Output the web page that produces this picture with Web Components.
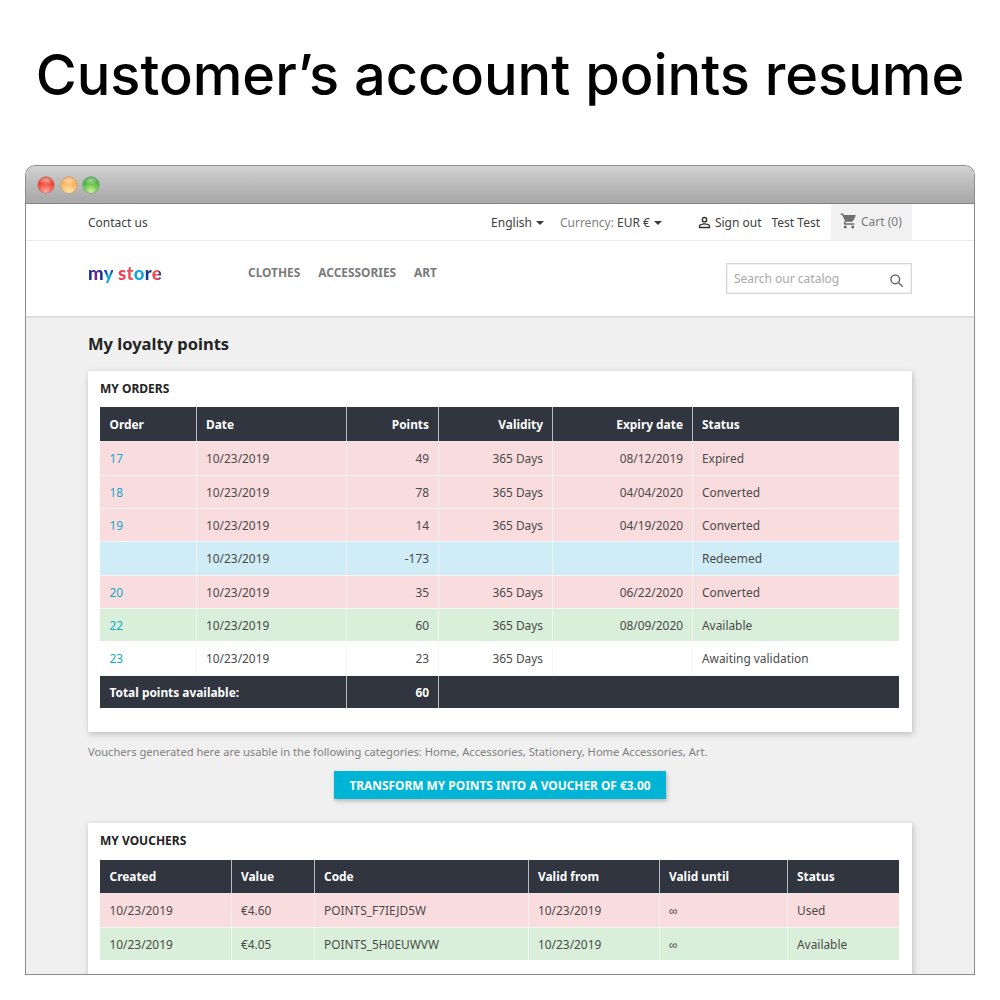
<!DOCTYPE html>
<html lang="en"><head><meta charset="utf-8"><title>Customer's account points resume</title>
<style>
html,body{margin:0;padding:0;background:#fff}
body{font-family:"Noto Sans",sans-serif;width:1000px;height:1000px;overflow:hidden}
</style></head><body>
<promo-page>
<h-title slot="title">Customer’s account points resume</h-title>
<app-window>
  <store-topbar></store-topbar>
  <store-header></store-header>
  <main-area>
    <page-heading>My loyalty points</page-heading>
    <points-card heading="My orders">
      <data-table id="orders"></data-table>
    </points-card>
    <note-text>Vouchers generated here are usable in the following categories: Home, Accessories, Stationery, Home Accessories, Art.</note-text>
    <action-button>Transform my points into a voucher of €3.00</action-button>
    <points-card heading="My vouchers">
      <data-table id="vouchers" style="margin-top:11px"></data-table>
    </points-card>
  </main-area>
</app-window>
</promo-page>
<script>
const def=(name,html,extra)=>{customElements.define(name,class extends HTMLElement{
  constructor(){super();this.attachShadow({mode:'open'}).innerHTML=html;}
  connectedCallback(){extra&&extra.call(this)}
})};
def('promo-page',`<style>:host{display:block}</style><slot name="title"></slot><slot></slot>`);
def('h-title',`<style>:host{display:block;height:165px;box-sizing:border-box;padding-top:39px;text-align:center;
font:540 55.9px/72px Inter,sans-serif;color:#000;white-space:nowrap}</style><slot></slot>`);
def('app-window',`<style>:host{display:block;width:950px;height:810px;margin-left:25px;box-sizing:border-box;border:1px solid #8b8b8b;border-top-color:#8f8f8f;border-radius:10px 10px 0 0;overflow:hidden;background:#f0f0f0}
.bar{height:37px;background:linear-gradient(#d2d2d2,#c6c6c6 25%,#acacac 85%,#a9a9a9);border-bottom:1px solid #828282;display:flex;align-items:center;gap:6.5px;padding-left:12px}
.d{width:16px;height:16px;border-radius:50%;box-sizing:border-box}
.r{background:radial-gradient(ellipse 60% 30% at 50% 18%,rgba(255,255,255,.55),transparent),radial-gradient(circle at 50% 90%,#ffa898,#f04838 55%,#d82818 85%);box-shadow:0 0 0 .5px #b85040}
.o{background:radial-gradient(ellipse 60% 30% at 50% 18%,rgba(255,255,255,.5),transparent),radial-gradient(circle at 50% 90%,#ffe4a8,#fcb560 55%,#e89038 90%);box-shadow:0 0 0 .5px #c89050}
.g{background:radial-gradient(ellipse 60% 30% at 50% 18%,rgba(255,255,255,.5),transparent),radial-gradient(circle at 50% 90%,#d0f098,#58bc44 55%,#1c8a20 90%);box-shadow:0 0 0 .5px #50904c}
</style><div class="bar"><span class="d r"></span><span class="d o"></span><span class="d g"></span></div><slot></slot>`);
def('store-topbar',`<style>:host{display:flex;align-items:center;height:36px;background:#fff;border-bottom:1px solid #eee;padding-left:62px;padding-right:62px;font-size:12px;color:#404040;line-height:36px;white-space:nowrap}
.sp{flex:1}.caret{display:inline-block;border:4px solid transparent;border-top-color:#3a3a3a;border-bottom:0;margin-left:4px;vertical-align:2px}
.tx{padding-top:2px}
.cur{margin-left:16px}.muted{color:#7f7f7f}
.u{margin-left:34px;display:flex;align-items:center;gap:2px}
.t{margin-left:10px;margin-right:11px}
.cart{width:81px;height:36px;background:#f1f1f1;display:flex;align-items:center;color:#7a7a7a;box-sizing:border-box;padding-left:9px;gap:3px;line-height:36px}
svg{display:block}
</style><span class="tx">Contact us</span><span class="sp"></span>
<span class="tx">English<i class="caret"></i></span>
<span class="cur tx"><span class="muted">Currency:</span> EUR €<i class="caret"></i></span>
<span class="u tx"><svg width="17" height="17" viewBox="0 0 24 24" fill="#2f2f2f" style="margin-top:-1px"><path d="M12 5.9a2.1 2.1 0 1 1 0 4.2 2.1 2.1 0 0 1 0-4.2m0 9c2.97 0 6.1 1.46 6.1 2.1v1.1H5.9V17c0-.64 3.13-2.1 6.1-2.1M12 4a4 4 0 1 0 0 8 4 4 0 0 0 0-8zm0 9c-2.67 0-8 1.34-8 4v3h16v-3c0-2.66-5.33-4-8-4z"/></svg>Sign out</span>
<span class="t tx">Test Test</span>
<span class="cart"><svg width="18" height="18" viewBox="0 0 24 24" fill="#6f6f6f" style="margin-top:-2px"><path d="M7 18c-1.1 0-1.99.9-1.99 2S5.9 22 7 22s2-.9 2-2-.9-2-2-2zM1 2v2h2l3.6 7.59-1.35 2.45c-.16.28-.25.61-.25.96 0 1.1.9 2 2 2h12v-2H7.42c-.14 0-.25-.11-.25-.25l.03-.12.9-1.63h7.45c.75 0 1.41-.41 1.75-1.03l3.58-6.49A1 1 0 0 0 20.01 4H5.21l-.94-2H1zm16 16c-1.1 0-1.99.9-1.99 2s.89 2 1.99 2 2-.9 2-2-.9-2-2-2z"/></svg><span>Cart (0)</span></span>`);
def('store-header',`<style>:host{display:flex;height:75px;background:#fff;box-shadow:0 1px 2px rgba(0,0,0,.14);padding:0 62px;position:relative}
.logo{width:160px;padding-top:18px;font:900 18.5px/28px Lato,sans-serif;letter-spacing:.3px;white-space:nowrap}
.logo b{font-weight:900;-webkit-background-clip:text;background-clip:text;color:transparent}
nav{display:flex;gap:18px;font-size:11.9px;font-weight:700;color:#7a7a7a;padding-top:23px;line-height:17px;flex:1}
.s{width:186px;height:31px;margin-top:22px;box-sizing:border-box;border:1px solid #d6d6d6;box-shadow:inset 0 0 0 .5px #e4e4e4;display:flex;align-items:center;justify-content:space-between;padding:0 7px 0 7px;font-size:12px;color:#a9a9a9}
.s span{margin-top:-1px}
svg{display:block;margin-top:3px}
</style><div class="logo"><b style="background-image:linear-gradient(90deg,#1c2f9c 30%,#8a1f8c 50%,#1c2f9c 70%)">m</b><b style="background-image:linear-gradient(#1f3fa8 40%,#12a9dc 65%)">y</b> <b style="background-image:linear-gradient(#ef4050,#ef4050)">s</b><b style="background-image:linear-gradient(#ef4b55,#ef4b55)">t</b><b style="background-image:linear-gradient(#12a4dc,#12a4dc)">o</b><b style="background-image:linear-gradient(#1a3a90,#1a3a90)">r</b><b style="background-image:linear-gradient(90deg,#ef4a50 60%,#1a3a90 80%)">e</b></div>
<nav><span>CLOTHES</span><span>ACCESSORIES</span><span>ART</span></nav>
<div class="s"><span>Search our catalog</span><svg width="15" height="15" viewBox="0 0 24 24" fill="none" stroke="#6a6a6a" stroke-width="2.4"><circle cx="10" cy="10" r="7"/><path d="M15.5 15.5 22 22"/></svg></div>`);
def('main-area',`<style>:host{display:block;padding:0 62px}</style><slot></slot>`);
def('page-heading',`<style>:host{display:block;font-size:16.5px;font-weight:700;color:#232323;line-height:24px;padding-top:16px;margin-bottom:15px}</style><slot></slot>`);
customElements.define('points-card',class extends HTMLElement{
  constructor(){super();this.attachShadow({mode:'open'}).innerHTML=`<style>:host{display:block;background:#fff;box-shadow:1px 2px 6px rgba(0,0,0,.22);padding:9px 13px 24px 12px}
  h2{margin:0 0 10px;font-size:12px;line-height:17px;font-weight:700;text-transform:uppercase;color:#232323}</style><h2></h2><slot></slot>`;}
  connectedCallback(){this.shadowRoot.querySelector('h2').textContent=this.getAttribute('heading')}
});
def('note-text',`<style>:host{display:block;font-size:11.15px;color:#7f7f7f;line-height:16px;margin-top:12px}</style><slot></slot>`);
def('action-button',`<style>:host{display:block;width:332px;height:28px;margin:11px auto 24px;background:#00b4d6;color:#fff;font-size:11.9px;font-weight:700;text-transform:uppercase;text-align:center;line-height:28px;box-shadow:1px 2px 4px rgba(0,0,0,.25);white-space:nowrap}</style><slot></slot>`);
customElements.define('data-table',class extends HTMLElement{
  constructor(){super();this.attachShadow({mode:'open'});}
  render({cols,head,rows,foot,hh}){
    const colg=cols.map(c=>`<col style="width:${c.w}px">`).join('');
    const al=i=>cols[i].r?' class="r"':'';
    const h=`<tr style="height:${hh}px">${head.map((t,i)=>`<th${al(i)}>${t}</th>`).join('')}</tr>`;
    const b=rows.map(r=>`<tr class="${r.c}" style="height:${r.h}px">${r.v.map((t,i)=>`<td${al(i)}>${i===0&&r.link?`<a>${t}</a>`:t}</td>`).join('')}</tr>`).join('');
    const f=foot?`<tr class="foot" style="height:33px"><th colspan="2">${foot[0]}</th><th class="r">${foot[1]}</th><th colspan="3"></th></tr>`:'';
    this.shadowRoot.innerHTML=`<style>:host{display:block}
    table{border-collapse:collapse;table-layout:fixed;width:799px;font-size:11.9px;color:#4a4a4a}
    th{background:#30353f;color:#fff;text-align:left;font-weight:700;padding:0 8.5px 0 9.5px;border-left:1px solid #b9bcc2;line-height:16px;border-bottom:1px solid #e8e8e8}
    th:first-child{border-left:0}.foot th{border-bottom:0}
    td{padding:0 8.5px 0 9.5px;border:1px solid rgba(255,255,255,.55);border-top-color:rgba(255,255,255,.5);white-space:nowrap;line-height:16px}
    td:first-child{border-left:0}td:last-child{border-right:0}
    .r{text-align:right}
    .p td{background:#f9dcde}.g td{background:#daefd9}.b td{background:#d0ecf6}.w td{background:#fff;border-color:#f6f6f6}
    a{color:#12a8c8}
    </style><table><colgroup>${colg}</colgroup>${h}${b}${f}</table>`;
  }
});
const row=(h,c,o,p,d,e,s)=>({h,c,link:true,v:[o,'10/23/2019',p,d?'365 Days':'',e,s]});
document.getElementById('orders').render({hh:34,
  cols:[{w:96},{w:150},{w:92,r:1},{w:114,r:1},{w:140,r:1},{w:207}],
  head:['Order','Date','Points','Validity','Expiry date','Status'],
  rows:[row(34,'p','17','49',1,'08/12/2019','Expired'),row(33,'p','18','78',1,'04/04/2020','Converted'),row(33,'p','19','14',1,'04/19/2020','Converted'),
  row(34,'b','','-173',0,'','Redeemed'),row(33,'p','20','35',1,'06/22/2020','Converted'),row(33,'g','22','60',1,'08/09/2020','Available'),row(34,'w','23','23',1,'','Awaiting validation')],
  foot:['Total points available:','60']});
document.getElementById('vouchers').render({hh:33,
  cols:[{w:131},{w:83},{w:214},{w:131},{w:128},{w:112}],
  head:['Created','Value','Code','Valid from','Valid until','Status'],
  rows:[{h:34,c:'p',v:['10/23/2019','€4.60','POINTS_F7IEJD5W','10/23/2019','∞','Used']},{h:33,c:'g',v:['10/23/2019','€4.05','POINTS_5H0EUWVW','10/23/2019','∞','Available']}]});
</script>
</body></html>
